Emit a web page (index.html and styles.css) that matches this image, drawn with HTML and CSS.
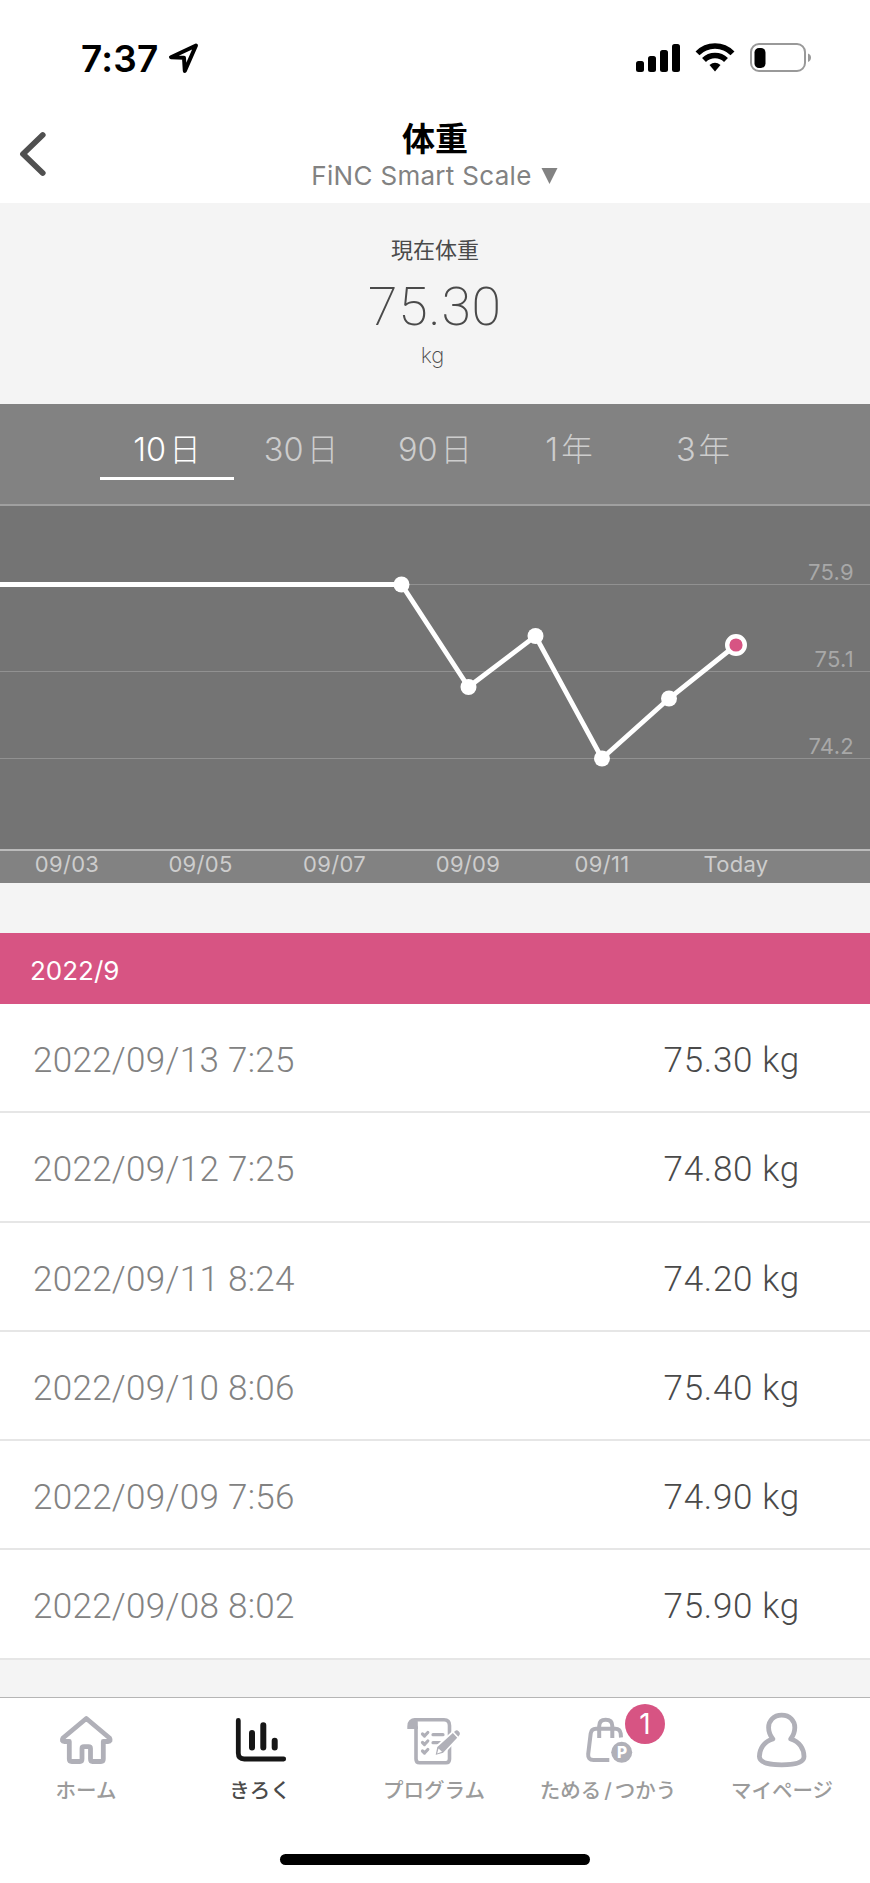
FILE: index.html
```html
<!DOCTYPE html>
<html lang="ja">
  <head>
    <meta charset="UTF-8" />
    <meta name="viewport" content="width=device-width, initial-scale=1.0" />
    <title>体重</title>
    <link rel="stylesheet" href="styles.css">
  </head>
  <body>
    <div class="status-bar">
      <span class="time">7:37</span>
      <svg class="location" width="32" height="32" viewBox="0 0 32 32">
        <path d="M29 3.5 L4 15.2 L17 15.8 L17.8 29 Z" />
      </svg>
      <svg class="status-icons" width="180" height="32" viewBox="0 0 180 32">
        <rect x="0" y="19" width="8" height="11" rx="2.5" />
        <rect x="12" y="14" width="8" height="16" rx="2.5" />
        <rect x="24" y="8" width="8" height="22" rx="2.5" />
        <rect x="36" y="2" width="8" height="28" rx="2.5" />
        <path class="wifi" d="M61.5 11.3 A24.5 24.5 0 0 1 96.5 11.3 M68 18 A15.5 15.5 0 0 1 90 18" />
        <path d="M73.5 23 Q79 18.6 84.5 23 L79 29.5 Z" />
        <rect class="battery" x="115" y="2" width="54" height="27" rx="8" />
        <rect x="118.5" y="6" width="11" height="20" rx="4.5" />
        <path class="nub" d="M172 11.5 Q175 12.5 175 15.5 Q175 18.5 172 20 Z" />
      </svg>
    </div>

    <header class="header">
      <svg class="back" width="30" height="46" viewBox="0 0 30 46">
        <path d="M24.7 4 L5 23 L24.7 42" />
      </svg>
      <div class="titles">
        <h1>体重</h1>
        <div class="device">
          <span>FiNC Smart Scale</span>
          <svg width="17" height="18" viewBox="0 0 18 18"><path d="M0.5 0.5 H17.5 L9 17.5 Z" /></svg>
        </div>
      </div>
      <div class="spacer"></div>
    </header>

    <section class="current">
      <div class="current-label">現在体重</div>
      <div class="current-value">75.30</div>
      <div class="current-unit">kg</div>
    </section>

    <nav class="periods">
      <div class="period active">10<span>日</span></div>
      <div class="period">30<span>日</span></div>
      <div class="period">90<span>日</span></div>
      <div class="period">1<span>年</span></div>
      <div class="period">3<span>年</span></div>
    </nav>

    <svg class="chart" width="870" height="377" viewBox="0 506 870 377">
      <rect class="axis-bg" x="0" y="851" width="870" height="32" />
      <path class="grid" d="M0 584.5 H870 M0 671.5 H870 M0 758.5 H870" />
      <path class="axis" d="M0 850 H870" />
      <g class="y-labels">
        <text x="854" y="579.5">75.9</text>
        <text x="854" y="666.5">75.1</text>
        <text x="854" y="753.5">74.2</text>
      </g>
      <g class="x-labels">
        <text x="67" y="872">09/03</text>
        <text x="200.5" y="872">09/05</text>
        <text x="334.5" y="872">09/07</text>
        <text x="468" y="872">09/09</text>
        <text x="602" y="872">09/11</text>
        <text x="736" y="872">Today</text>
      </g>
      <polyline class="line" points="0,584.5 401.5,584.5 468.5,687 535.5,636 602,758.5 669,698.5 736,645" />
      <g class="dots">
        <circle cx="401.5" cy="584.5" r="8" />
        <circle cx="468.5" cy="687" r="8" />
        <circle cx="535.5" cy="636" r="8" />
        <circle cx="602" cy="758.5" r="8" />
        <circle cx="669" cy="698.5" r="8" />
      </g>
      <circle class="today" cx="736" cy="645" r="8.8" />
    </svg>

    <section class="history">
      <h2>2022/9</h2>
      <ul>
        <li><span class="date">2022/09/13 7:25</span><span class="weight">75.30 kg</span></li>
        <li><span class="date">2022/09/12 7:25</span><span class="weight">74.80 kg</span></li>
        <li><span class="date">2022/09/11 8:24</span><span class="weight">74.20 kg</span></li>
        <li><span class="date">2022/09/10 8:06</span><span class="weight">75.40 kg</span></li>
        <li><span class="date">2022/09/09 7:56</span><span class="weight">74.90 kg</span></li>
        <li><span class="date">2022/09/08 8:02</span><span class="weight">75.90 kg</span></li>
      </ul>
    </section>

    <footer class="tab-bar">
      <div class="tabs">
        <div class="tab">
          <svg class="icon" width="60" height="60" viewBox="0 0 60 60">
            <path d="M29.3 8.5 L52.5 28 Q54.5 31.5 51 31.5 H46.3 V49 Q46.3 51.5 44 51.5 H35.5 Q33.5 51.5 33.5 49 V38.5 Q33.5 36.7 31.5 36.7 H27 Q25 36.7 25 38.5 V49 Q25 51.5 23 51.5 H14.8 Q12.3 51.5 12.3 49 V31.5 H7.5 Q4 31.5 6 28 Z" />
          </svg>
          <span>ホーム</span>
        </div>
        <div class="tab active">
          <svg class="icon" width="60" height="60" viewBox="0 0 60 60">
            <path d="M7.3 10.5 V43 Q7.3 49 13.3 49 H52.7" />
            <path class="bars" d="M21 23 V37.5 M32.3 15.3 V37.5 M43.7 30.8 V37.5" />
          </svg>
          <span>きろく</span>
        </div>
        <div class="tab">
          <svg class="icon" width="60" height="60" viewBox="0 0 60 60">
            <path class="paper" d="M10 9.8 H39 Q44.5 9.8 44.5 15.5 V49 Q44.5 52.7 41 52.7 H14.5 Q11 52.7 11 49 V17" />
            <path class="solid" d="M2.3 19 V16.5 Q2.3 8 10.5 8 Q13 9 12.8 13 V19 Z" />
            <path class="checks" d="M17.5 24 L19.5 26 L22.8 22.5 M17.5 32.5 L19.5 34.5 L22.8 31 M17.5 41 L19.5 43 L22.8 39.5 M28 24.7 H38 M28 32.7 H35" />
            <path class="pencil" d="M29.5 46 L31.5 36.5 L49.5 20.3 Q52 18.2 54.5 21 Q57.2 23.8 54.5 26.5 L38.5 43.5 Z" />
            <path class="pencil-lines" d="M47.5 21.5 L54 28.5" />
            <path class="pencil-tip" d="M32.2 43.5 L33.5 38.5 L37 41.8 Z" />
          </svg>
          <span>プログラム</span>
        </div>
        <div class="tab">
          <svg class="icon" width="60" height="60" viewBox="0 0 60 60">
            <path class="bag" d="M30.3 50 H14.5 Q8.7 50 9.2 44 L11.7 23.5 Q12.3 18.7 17 18.7 H36.5 Q41 18.7 41.7 23.5 L42 27.5 M20.2 28 V16 Q20.2 9.7 26.7 9.7 Q33.3 9.7 33.3 16 V28" />
            <circle class="point" cx="42.7" cy="42.3" r="10.5" />
            <text class="point-text" x="43" y="47.8">P</text>
          </svg>
          <b class="badge">1</b>
          <span>ためる<i>/</i>つかう</span>
        </div>
        <div class="tab">
          <svg class="icon" width="60" height="60" viewBox="0 0 60 60">
            <path d="M28.7 5.2 C20.5 5.2 15.6 11 15.6 17.5 C15.6 22.5 17.5 26 19.8 29 C11 31.5 6.4 39 6.4 46.5 C6.4 53 17 54.8 28.7 54.8 C40.5 54.8 51 53 51 46.5 C51 39 46.5 31.5 37.7 29 C40 26 41.8 22.5 41.8 17.5 C41.8 11 37 5.2 28.7 5.2 Z" />
          </svg>
          <span>マイページ</span>
        </div>
      </div>
      <div class="home-indicator"></div>
    </footer>
  </body>
</html>
```
FILE: styles.css
```css
* {
  box-sizing: border-box;
}
body {
  margin: 0;
  width: 870px;
  height: 1883px;
  overflow: hidden;
  background: #f4f4f4;
  font-family: "Inter", "Noto Sans CJK JP", sans-serif;
  color: #4a4a4a;
}
svg {
  display: block;
  flex-shrink: 0;
}
.status-bar {
  display: flex;
  align-items: center;
  height: 116px;
  padding: 0 59px 0 81px;
  background: #fff;
}
.time {
  width: 86px;
  font-size: 37px;
  font-weight: 600;
  letter-spacing: 0.2px;
  color: #000;
}
.location path {
  fill: none;
  stroke: #000;
  stroke-width: 4;
  stroke-linejoin: round;
}
.status-icons {
  margin-left: auto;
  margin-right: -5px;
}
.wifi {
  fill: none;
  stroke: #000;
  stroke-width: 5.5;
}
.battery {
  fill: none;
  stroke: #999;
  stroke-width: 2;
}
.nub {
  fill: #999;
}
.header {
  display: flex;
  height: 87px;
  padding: 0 18px;
  background: #fff;
}
.back {
  margin-top: 15px;
}
.back path {
  fill: none;
  stroke: #505050;
  stroke-width: 5.8;
  stroke-linecap: round;
  stroke-linejoin: round;
}
.titles {
  flex: 1;
  display: flex;
  flex-direction: column;
  align-items: center;
}
.spacer {
  width: 30px;
}
h1 {
  margin: 4px 0 0;
  font-size: 33px;
  line-height: 38px;
  font-weight: 700;
  color: #000;
}
.device {
  display: flex;
  align-items: center;
  gap: 9px;
  padding-right: 1px;
  line-height: 36px;
  font-size: 26px;
  letter-spacing: 0.3px;
  color: #828282;
}
.device svg {
  fill: #828282;
}
.current {
  height: 201px;
  padding-top: 31px;
  text-align: center;
}
.current-label {
  font-size: 22px;
  line-height: 32px;
}
.current-value {
  font-family: "Roboto", sans-serif;
  font-size: 53.5px;
  line-height: 64px;
  margin-top: 9px;
  font-weight: 200;
  letter-spacing: 0.8px;
}
.current-unit {
  font-size: 22px;
  line-height: 30px;
  margin-top: 1px;
  padding-right: 5px;
  font-weight: 200;
}
.periods {
  display: flex;
  height: 102px;
  padding: 0 100px;
  background: #828282;
  border-bottom: 2px solid #a0a0a0;
}
.period {
  width: 134px;
  height: 76px;
  display: flex;
  justify-content: center;
  gap: 3px;
  line-height: 91px;
  font-size: 32.5px;
  font-weight: 300;
  color: #cdcdcd;
}
.period.active {
  color: #fff;
  border-bottom: 3px solid #fff;
}
.period span {
  font-size: 31.5px;
}
.chart {
  background: #747474;
}
.axis-bg {
  fill: #828282;
}
.grid {
  stroke: #919191;
  stroke-width: 1.2;
}
.axis {
  stroke: #bbb;
  stroke-width: 2;
}
.y-labels {
  font-size: 22px;
  letter-spacing: 0.3px;
  text-anchor: end;
  fill: #a8a8a8;
}
.x-labels {
  font-size: 22px;
  letter-spacing: 0.3px;
  text-anchor: middle;
  fill: #cdcdcd;
}
.line {
  fill: none;
  stroke: #fff;
  stroke-width: 4.8;
}
.dots {
  fill: #fff;
}
.today {
  fill: #d75483;
  stroke: #fff;
  stroke-width: 4.4;
}
.history {
  padding-top: 50px;
}
h2 {
  margin: 0;
  height: 71px;
  padding-left: 30px;
  line-height: 76px;
  font-size: 26px;
  font-weight: 400;
  color: #fff;
  background: #d75483;
}
ul {
  list-style: none;
  margin: 0;
  padding: 0;
}
li {
  display: flex;
  justify-content: space-between;
  height: 109.3px;
  padding: 3px 70px 0 33px;
  line-height: 108px;
  font-family: "Roboto", sans-serif;
  font-size: 35px;
  font-weight: 300;
  background: #fff;
  border-bottom: 2px solid #e6e6e6;
}
.date {
  letter-spacing: 0.3px;
  color: #828282;
}
.weight {
  letter-spacing: 0.7px;
}
.tab-bar {
  height: 187px;
  margin-top: 37.2px;
  background: #fff;
  border-top: 1px solid #b5b5b5;
}
.tabs {
  display: flex;
  height: 156px;
}
.tab {
  position: relative;
  width: 174px;
  padding-top: 12px;
  display: flex;
  flex-direction: column;
  align-items: center;
  font-size: 20.5px;
  font-weight: 500;
  line-height: 42px;
  color: #9b9b9b;
}
.tab span {
  padding-right: 2px;
}
.tab.active {
  color: #4a4a4a;
}
.tab i {
  font-style: normal;
  margin: 0 3px;
}
.icon {
  fill: none;
  stroke: #b0b0b8;
  stroke-width: 4.8;
  stroke-linecap: round;
  stroke-linejoin: round;
}
.active .icon {
  stroke: #161616;
}
.icon .bars {
  stroke-width: 6;
}
.icon .paper {
  stroke-width: 3.6;
}
.icon .solid {
  fill: #b0b0b8;
  stroke: none;
}
.icon .checks {
  stroke-width: 3.2;
}
.icon .pencil {
  fill: #b0b0b8;
  stroke: #fff;
  stroke-width: 1.8;
}
.icon .pencil-lines {
  stroke: #fff;
  stroke-width: 1.6;
}
.icon .pencil-tip {
  fill: #fff;
  stroke: none;
}
.icon .bag {
  stroke-width: 4;
  stroke-linecap: butt;
}
.icon .point {
  fill: #b0b0b8;
  stroke: none;
}
.icon .point-text {
  fill: #fff;
  stroke: none;
  font-size: 15.5px;
  font-weight: 800;
  text-anchor: middle;
}
.badge {
  position: absolute;
  top: 6px;
  left: 103px;
  width: 40px;
  height: 40px;
  border-radius: 50%;
  background: #d75483;
  color: #fff;
  font-size: 28px;
  font-weight: 400;
  line-height: 40px;
  text-align: center;
}
.home-indicator {
  width: 310px;
  height: 11px;
  margin: 0 auto;
  border-radius: 6px;
  background: #000;
}
```
